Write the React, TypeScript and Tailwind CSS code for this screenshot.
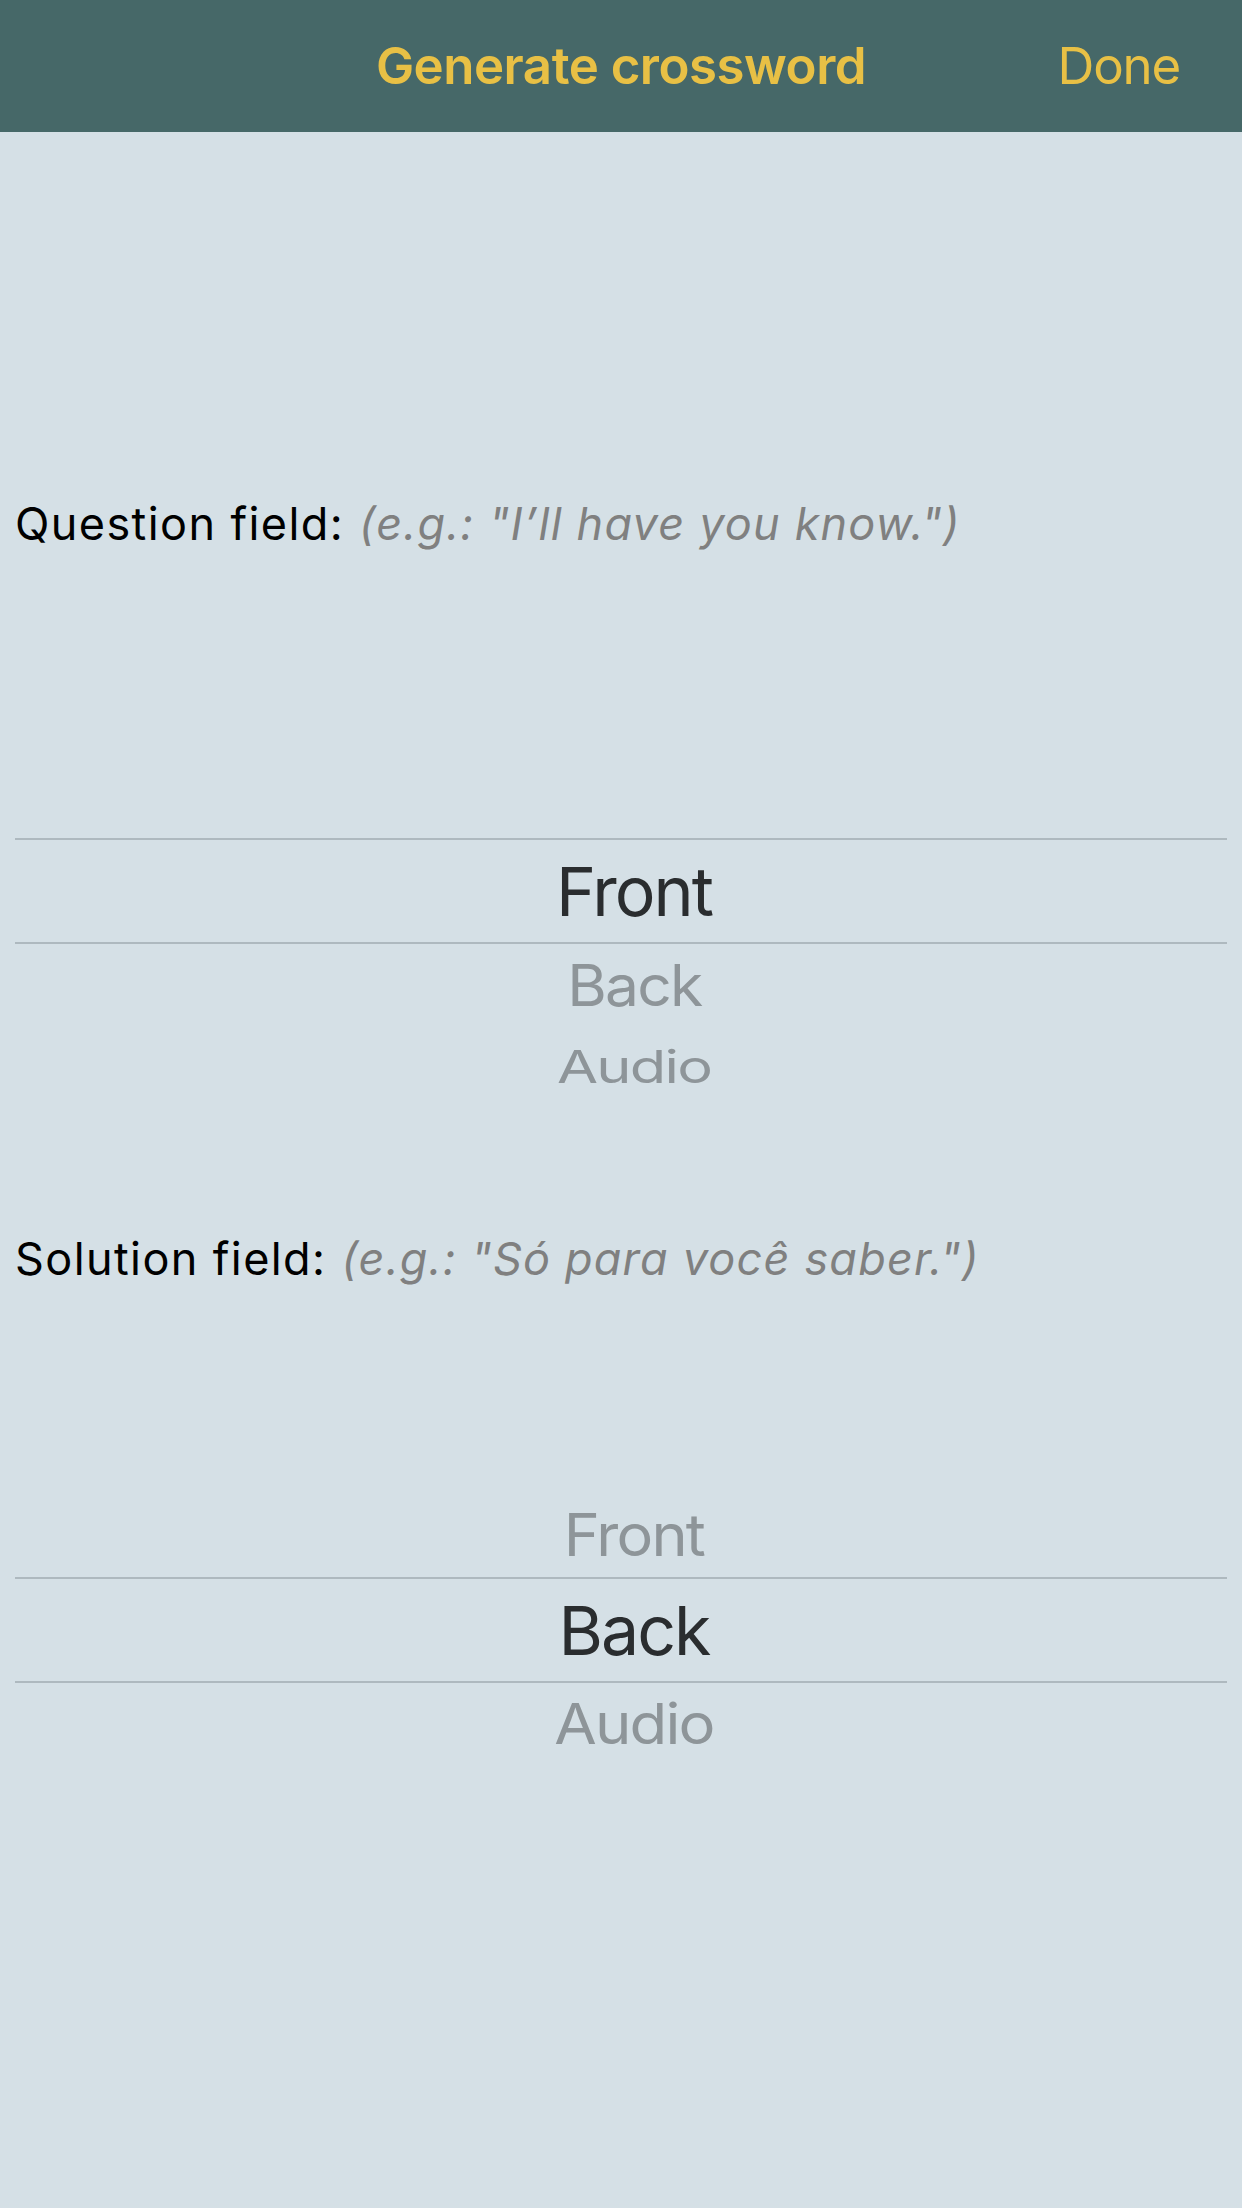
import React from "react";

const font = { fontFamily: "Inter, 'Liberation Sans', sans-serif" };

function Line() {
  return (
    <div className="px-[15px]">
      <div className="h-[2px] bg-[#AEB9BF]" />
    </div>
  );
}

export default function App() {
  return (
    <div className="w-[1242px] min-h-[2208px] bg-[#D5E0E6] flex flex-col" style={font}>
      <div className="h-[132px] bg-[#466868] flex items-center relative">
        <div className="flex-1 text-center text-[51px] font-semibold text-[#E8C045] tracking-[-0.5px]">
          Generate crossword
        </div>
        <div className="absolute right-[62px] top-0 h-[132px] flex items-center text-[51px] text-[#E8C045] tracking-[-1.2px]">
          Done
        </div>
      </div>

      <div className="h-[362px]" />
      <div className="h-[60px] flex items-center pl-[15px] text-[45px]">
        <span className="text-black tracking-[1.4px]">Question field:</span>
        <span className="ml-[15px] italic text-[#808080] tracking-[1.2px]">(e.g.: "I’ll have you know.")</span>
      </div>

      <div className="h-[284px]" />
      <Line />
      <div className="h-[102px] flex items-center justify-center pl-[26px] text-[#2A2D2F]">
        <span className="block text-[68px] leading-none tracking-[-2px]">Front</span>
      </div>
      <Line />
      <div className="h-[82px] flex items-center justify-center pl-[26px] text-[#8E9599]">
        <span className="block text-[68px] leading-none tracking-[-2px] scale-x-[0.89] scale-y-[0.84]">Back</span>
      </div>
      <div className="h-[79px] flex items-center justify-center pl-[26px] text-[#8E9599]">
        <span className="block text-[68px] leading-none tracking-[-2px] scale-x-[0.876] scale-y-[0.67]">Audio</span>
      </div>

      <div className="h-[124px]" />
      <div className="h-[60px] flex items-center pl-[15px] text-[45px]">
        <span className="text-black tracking-[1.4px]">Solution field:</span>
        <span className="ml-[15px] italic text-[#808080] tracking-[1.2px]">(e.g.: "Só para você saber.")</span>
      </div>

      <div className="h-[202px]" />
      <div className="h-[86px] flex items-center justify-center pl-[26px] text-[#8E9599]">
        <span className="block text-[68px] leading-none tracking-[-2px] scale-x-[0.9] scale-y-[0.86]">Front</span>
      </div>
      <Line />
      <div className="h-[102px] flex items-center justify-center pl-[26px] text-[#2A2D2F]">
        <span className="block text-[68px] leading-none tracking-[-2px]">Back</span>
      </div>
      <Line />
      <div className="h-[82px] flex items-center justify-center pl-[26px] text-[#8E9599]">
        <span className="block text-[68px] leading-none tracking-[-2px] scale-x-[0.906] scale-y-[0.82]">Audio</span>
      </div>
    </div>
  );
}
